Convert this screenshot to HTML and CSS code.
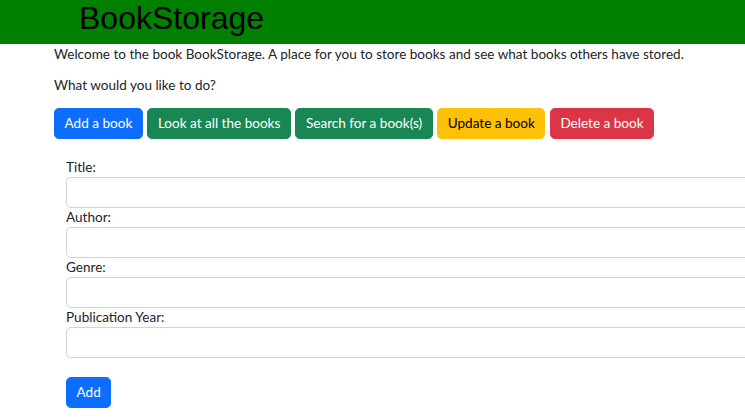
FILE: index.html
```html
<!DOCTYPE html>
<html>
<head>
<meta charset="utf-8">
<link rel="stylesheet" href="styles.css">
</head>
<body>
<header class="topbar"><h1 class="brand">BookStorage</h1></header>
<main class="content">
  <p class="text">Welcome to the book BookStorage. A place for you to store books and see what books others have stored.</p>
  <p class="text">What would you like to do?</p>
  <div class="actions">
    <button class="btn btn-primary">Add a book</button>
    <button class="btn btn-success">Look at all the books</button>
    <button class="btn btn-success">Search for a book(s)</button>
    <button class="btn btn-warning">Update a book</button>
    <button class="btn btn-danger">Delete a book</button>
  </div>
  <form class="book-form">
    <label class="field-label">Title:</label>
    <input class="field-input" type="text">
    <label class="field-label">Author:</label>
    <input class="field-input" type="text">
    <label class="field-label">Genre:</label>
    <input class="field-input" type="text">
    <label class="field-label">Publication Year:</label>
    <input class="field-input" type="text">
    <div class="submit-row"><button type="button" class="btn btn-primary">Add</button></div>
  </form>
</main>
</body>
</html>
```
FILE: styles.css
```css
html, body { margin: 0; padding: 0; overflow: hidden; }
body {
  font-family: "Lato", "Noto Sans", sans-serif;
  font-size: 13.55px;
  line-height: 19.2px;
  color: #212529;
  background: #fff;
}
.topbar {
  background: #008000;
  height: 44px;
  padding-left: 79px;
}
.brand {
  margin: 0;
  font-family: "Liberation Sans", Arial, sans-serif;
  font-weight: normal;
  font-size: 32px;
  line-height: 36px;
  color: #000;
}
.content { padding-left: 54px; }
.text { margin: 0 0 12.8px; }
.text:first-child { padding-top: 1px; margin-bottom: 11.8px; }
.actions { display: flex; gap: 4.4px; margin-bottom: 19px; }
.btn {
  font-family: inherit;
  font-size: 13.55px;
  line-height: 19.2px;
  padding: 5px 9.6px;
  border: 0.8px solid transparent;
  border-radius: 4.8px;
  color: #fff;
  cursor: pointer;
}
.btn-primary { background: #0d6efd; border-color: #0d6efd; }
.btn-success { background: #198754; border-color: #198754; }
.btn-warning { background: #ffc107; border-color: #ffc107; color: #000; }
.btn-danger { background: #dc3545; border-color: #dc3545; }
.book-form {
  padding-left: 12px;
  display: flex;
  flex-direction: column;
  align-items: flex-start;
}
.field-label { display: block; height: 19px; }
.field-input {
  display: block;
  width: 690px;
  height: 31px;
  box-sizing: border-box;
  border: 1px solid #ced4da;
  border-radius: 4.8px;
  font: inherit;
  padding: 4px 10px;
}
.submit-row { margin-top: 19px; }
```
